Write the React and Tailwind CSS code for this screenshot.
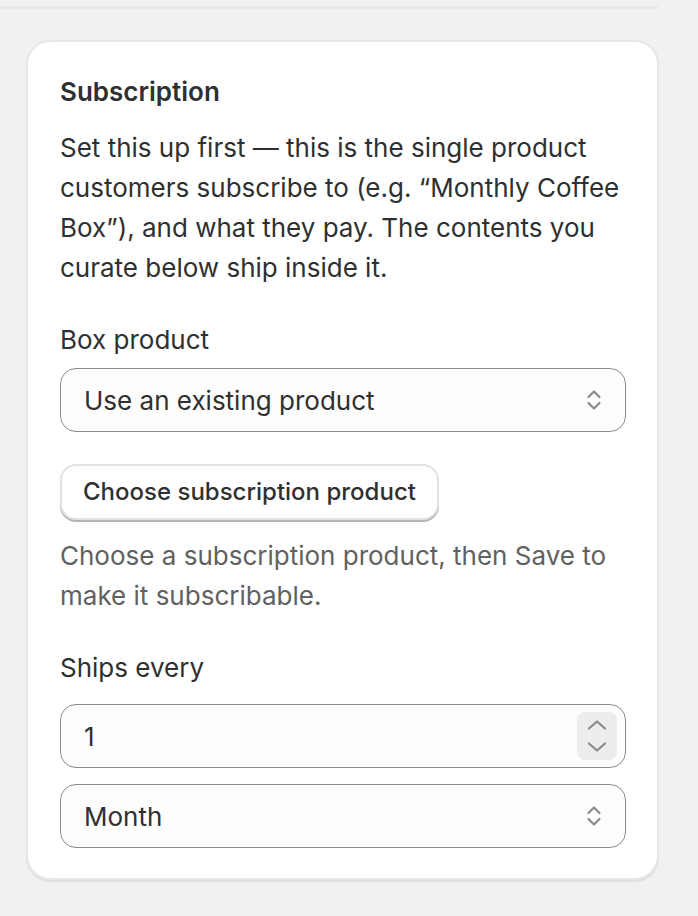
import React from "react";

function SelectChevron() {
  return (
    <svg width="20" height="32" viewBox="0 0 20 32" fill="none" className="shrink-0">
      <path d="M4.5 13 L10 7.5 L15.5 13" stroke="#8a8a8a" strokeWidth="2.2" strokeLinecap="round" strokeLinejoin="round" />
      <path d="M4.5 19 L10 24.5 L15.5 19" stroke="#8a8a8a" strokeWidth="2.2" strokeLinecap="round" strokeLinejoin="round" />
    </svg>
  );
}

function Select({ value }) {
  return (
    <div className="flex h-[64px] items-center justify-between rounded-[16px] border-[1.5px] border-[#8a8a8a] bg-[#fdfdfd] pl-[23px] pr-[21px] text-[26px] text-[#303030]">
      <span>{value}</span>
      <SelectChevron />
    </div>
  );
}

export default function App() {
  return (
    <div className="min-h-[916px] w-[698px] bg-[#f1f1f1] font-['Inter',sans-serif] text-[#303030]">
      <div className="h-[6px]" />
      <div className="h-[3px] w-[658px] bg-[#e8e8e8]" />
      <div className="h-[31px]" />
      <div className="ml-[26px] w-[633px] rounded-[24px] border-2 border-[#e6e6e6] bg-white pb-[30px] pl-[32px] pr-[31px] pt-[30px] shadow-[0_2px_0_rgba(0,0,0,0.07)]">
        <h2 className="text-[26px] font-semibold leading-[40px]">Subscription</h2>
        <p className="mt-[16px] text-[26px] leading-[40px]">
          Set this up first — this is the single product customers subscribe to (e.g. “Monthly Coffee Box”), and what they pay. The contents you curate below ship inside it.
        </p>

        <div className="mt-[32px] text-[26px] leading-[40px]">Box product</div>
        <div className="mt-[8px]">
          <Select value="Use an existing product" />
        </div>

        <div className="mt-[32px]">
          <button className="flex h-[56px] items-center rounded-[16px] border-2 border-[#e3e3e3] bg-white px-[21px] text-[24px] font-[550] text-[#303030] shadow-[0_2px_0_#b5b5b5]">
            Choose subscription product
          </button>
        </div>
        <p className="mt-[16px] text-[26px] leading-[40px] text-[#616161]">
          Choose a subscription product, then Save to make it subscribable.
        </p>

        <div className="mt-[32px] text-[26px] leading-[40px]">Ships every</div>
        <div className="mt-[16px] flex h-[64px] items-center justify-between rounded-[16px] border-[1.5px] border-[#8a8a8a] bg-[#fdfdfd] pl-[23px] pr-[8px] text-[26px]">
          <span>1</span>
          <div className="flex h-[48px] w-[40px] flex-col items-center justify-center gap-[12px] rounded-[8px] bg-[#ededed]">
            <svg width="20" height="10" viewBox="0 0 20 10" fill="none">
              <path d="M2 8.5 L10 1.5 L18 8.5" stroke="#8a8a8a" strokeWidth="2.2" strokeLinecap="round" strokeLinejoin="round" />
            </svg>
            <svg width="20" height="10" viewBox="0 0 20 10" fill="none">
              <path d="M2 1.5 L10 8.5 L18 1.5" stroke="#8a8a8a" strokeWidth="2.2" strokeLinecap="round" strokeLinejoin="round" />
            </svg>
          </div>
        </div>
        <div className="mt-[16px]">
          <Select value="Month" />
        </div>
      </div>
    </div>
  );
}
